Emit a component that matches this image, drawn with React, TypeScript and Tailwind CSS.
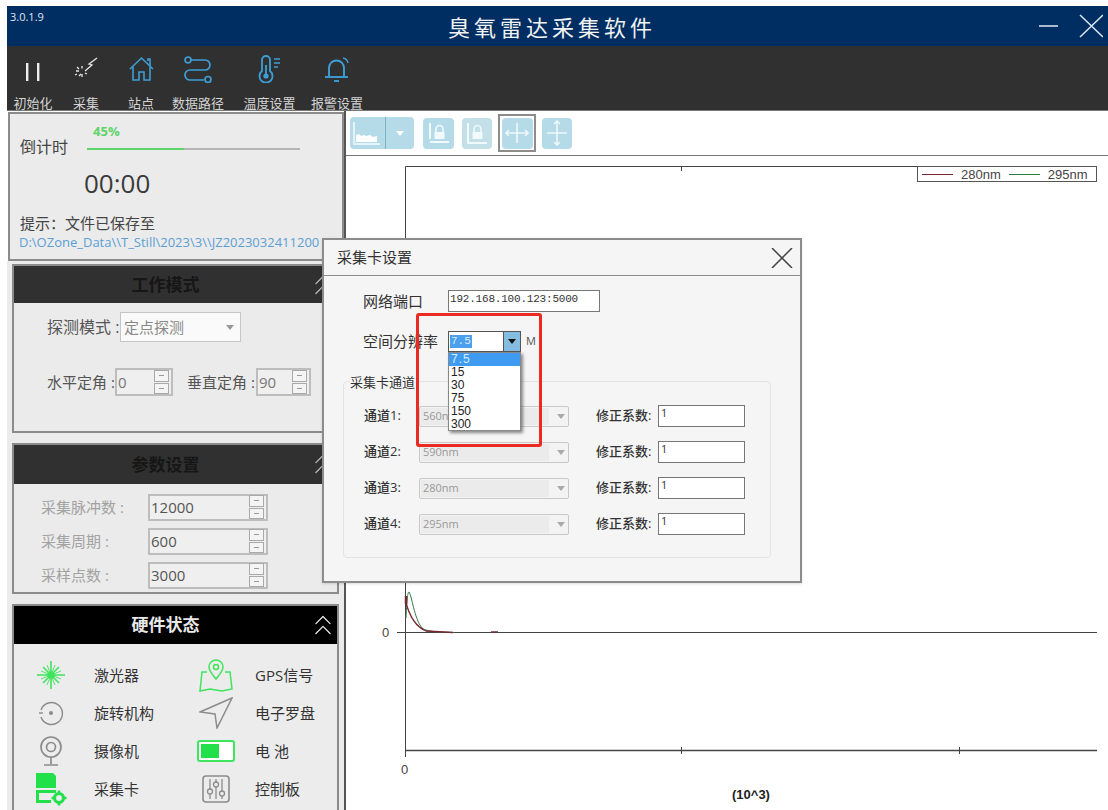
import React from "react";
import { ChevronsUp } from "lucide-react";

const CJK = "font-['Open_Sans','Noto_Sans_CJK_SC',sans-serif]";
const MONO = "font-['Liberation_Mono','Noto_Sans_CJK_SC',monospace]";

function ToolItem({ label, icon, w }: { label: string; icon: React.ReactNode; w: string }) {
  return (
    <div className={`flex flex-col items-center ${w}`}>
      <div className="h-[37px] flex items-end justify-center">{icon}</div>
      <div className="mt-[12px] text-[13px] leading-[16px] text-[#d4d4d4] whitespace-nowrap">{label}</div>
    </div>
  );
}

const BLUE = "#3d9fd8";

function PauseIcon() {
  return (
    <svg width="14" height="22" viewBox="0 0 14 22" fill="#eeeeee">
      <rect x="0" y="2" width="2.4" height="18" />
      <rect x="11" y="2" width="2.4" height="18" />
    </svg>
  );
}

function BurstIcon() {
  return (
    <svg width="26" height="26" viewBox="0 0 26 26" fill="none" stroke="#e8e8e8" strokeWidth="1.3" className="mb-[2px]">
      <path d="M24 3 16 9l3 1-7 6" />
      <path d="M9 11v2.5M9 19v3M3 16h3M12 18l2 1M4 12l2 2M6 21l2-2M2 20l2-1" />
    </svg>
  );
}

function HouseIcon() {
  return (
    <svg width="25" height="26" viewBox="0 0 25 26" fill="none" stroke={BLUE} strokeWidth="1.6" className="mb-[1px]">
      <path d="M1 13 12.5 2 24 13" />
      <path d="M19 5V3h2v7" />
      <path d="M4 11v13h6v-8h5v8h6V11" />
    </svg>
  );
}

function RouteIcon() {
  return (
    <svg width="30" height="27" viewBox="0 0 30 27" fill="none" stroke={BLUE} strokeWidth="1.7">
      <circle cx="5" cy="4" r="3" />
      <path d="M8 4h14a4.5 4.5 0 0 1 0 10H7a5 5 0 0 0 0 10h14" />
      <circle cx="25" cy="23.5" r="3" />
    </svg>
  );
}

function ThermoIcon() {
  return (
    <svg width="24" height="28" viewBox="0 0 24 28" fill="none" stroke={BLUE} strokeWidth="1.8">
      <path d="M4 16V5a4 4 0 0 1 8 0v11a6.5 6.5 0 1 1-8 0z" />
      <circle cx="8" cy="21" r="2.6" fill={BLUE} stroke="none" />
      <path d="M8 10v9" />
      <path d="M16 4h6M16 8h6M16 12h4" strokeWidth="1.4" />
    </svg>
  );
}

function BellIcon() {
  return (
    <svg width="28" height="28" viewBox="0 0 28 28" fill="none" stroke={BLUE} strokeWidth="1.9">
      <path d="M6 21V13a7.5 7.5 0 0 1 15 0v8" />
      <path d="M2 22h23" />
      <path d="M11 26h5" />
      <path d="M20 3a6 6 0 0 1 5 5" strokeWidth="1.4" />
    </svg>
  );
}

function Spinner() {
  return (
    <div className="flex flex-col gap-[1px] w-[15px] h-[24px]">
      <div className="flex-1 bg-[#f4f4f4] border border-[#a9a9a9] flex items-center justify-center">
        <span className="w-[5px] h-[1px] bg-[#999]" />
      </div>
      <div className="flex-1 bg-[#f4f4f4] border border-[#a9a9a9] flex items-center justify-center">
        <span className="w-[5px] h-[1px] bg-[#999]" />
      </div>
    </div>
  );
}

function PanelHeader({ title, dark, h }: { title: string; dark?: boolean; h: string }) {
  return (
    <div className={`${h} relative flex items-center justify-center pr-[20px] ${dark ? "bg-black text-[#e8e8e8]" : "bg-[#303030] text-[#161616]"}`}>
      <span className="text-[17px] font-bold">{title}</span>
      <ChevronsUp className={`absolute right-[-3px] top-[2px] ${dark ? "text-[#e8e8e8]" : "text-[#bbb]"}`} size={34} strokeWidth={0.9} />
    </div>
  );
}

function ParamRow({ label, value }: { label: string; value: string }) {
  return (
    <div className="flex items-center h-[34px]">
      <span className="w-[134px] pl-[27px] text-[15px] text-[#a2a2a2] whitespace-nowrap">{label}</span>
      <div className="w-[120px] h-[27px] border-2 border-[#bdbdbd] bg-[#efefef] flex items-center justify-between pl-[1px] pr-[2px] text-[15px] text-[#555]">
        {value}
        <Spinner />
      </div>
    </div>
  );
}

function AngleBox({ value, width }: { value: string; width: string }) {
  return (
    <div className={`${width} h-[28px] border-2 border-[#bdbdbd] bg-[#efefef] flex items-center justify-between pl-[1px] pr-[2px] text-[15px] text-[#777]`}>
      {value}
      <Spinner />
    </div>
  );
}

function HwItem({ icon, label, gap }: { icon: React.ReactNode; label: string; gap: string }) {
  return (
    <div className="flex items-center h-[38px]">
      <div className="w-[54px] flex justify-center shrink-0">{icon}</div>
      <span className={`${gap} text-[15px] text-[#333] whitespace-nowrap`}>{label}</span>
    </div>
  );
}

function ChannelRow({ name, value }: { name: string; value: string }) {
  return (
    <div className="flex items-center h-[36px]">
      <span className="w-[55px] text-[13px] font-medium text-[#333] whitespace-nowrap">{name}</span>
      <div className="w-[150px] h-[21px] border border-[#c8c8c8] rounded-[2px] bg-[#f3f3f3] flex items-center">
        <div className="w-[128px] h-[17px] ml-[1px] bg-[#ebebeb] pl-[2px] text-[11px] leading-[15px] text-[#999]">{value}</div>
        <svg width="8" height="5" viewBox="0 0 8 5" className="ml-[8px]"><path d="M0 0h8L4 5z" fill="#aaa" /></svg>
      </div>
      <span className="ml-[27px] w-[62px] text-[13px] font-medium text-[#333] whitespace-nowrap">修正系数:</span>
      <div className="w-[87px] h-[22px] border border-[#777] bg-white text-[11px] leading-[14px] pl-[2px] text-[#333]">1</div>
    </div>
  );
}

function LockGlyph({ axis }: { axis?: boolean }) {
  return (
    <svg width="24" height="24" viewBox="0 0 24 24" fill="none" stroke="#f2f9fb" strokeWidth="2">
      {axis ? <path d="M3 2v20h19" /> : <path d="M3 2v16M3 21h19" />}
      <path d="M9 11V8a3.5 3.5 0 0 1 7 0v3" strokeWidth="1.6" />
      <rect x="7.5" y="11" width="10" height="7" fill="#f2f9fb" stroke="none" />
    </svg>
  );
}

function PlotArea() {
  return (
    <svg viewBox="0 0 762 654" width="762" height="654" className="block">
      <g stroke="#444" fill="none" strokeWidth="1">
        <path d="M59.5 10.5V601M59.5 10.5H751M51 476.5H751M335.5 10v5M335.5 591v7M613.5 591v7" />
        <path d="M59 594.5H751" strokeWidth="1.5" />
      </g>
      <path d="M60 462C61 440 62 436 63 436 66 440 68 462 76 472 82 476 90 476 108 476.5" fill="none" stroke="#2f7a42" strokeWidth="1" />
      <path d="M59.5 445C62 455 68 470 80 475L107 476.5" fill="none" stroke="#7a2730" strokeWidth="1.3" />
      <path d="M60 440v8" stroke="#7a2730" strokeWidth="2.5" />
      <path d="M145 476h7" stroke="#7a2730" strokeWidth="1.5" />
    </svg>
  );
}

export default function App() {
  return (
    <div className={`w-[1108px] h-[810px] overflow-hidden relative bg-white pl-[7px] pt-[6px] ${CJK}`}>
      {/* title bar */}
      <div className="h-[40px] bg-[#002e63] flex items-center relative text-white">
        <span className="absolute left-[3px] top-[3px] text-[11px] text-[#dfe6ee]">3.0.1.9</span>
        <div className="flex-1 pl-[58px] text-center text-[22px] tracking-[4px] text-[#f2f2f2] font-['Noto_Sans_CJK_SC',sans-serif]">臭氧雷达采集软件</div>
        <svg width="64" height="24" viewBox="0 0 64 24" fill="none" stroke="#dfe8f0" strokeWidth="1.5" className="mr-[5px] shrink-0">
          <path d="M0 12h19M41 1l23 22M64 1 41 23" />
        </svg>
      </div>

      {/* toolbar */}
      <div className="h-[65px] bg-[#303030] flex items-start pl-[1px] border-b border-[#777]">
        <ToolItem w="w-[50px]" label="初始化" icon={<PauseIcon />} />
        <ToolItem w="w-[56px]" label="采集" icon={<BurstIcon />} />
        <ToolItem w="w-[54px]" label="站点" icon={<HouseIcon />} />
        <ToolItem w="w-[60px]" label="数据路径" icon={<RouteIcon />} />
        <ToolItem w="w-[83px]" label="温度设置" icon={<ThermoIcon />} />
        <ToolItem w="w-[52px]" label="报警设置" icon={<BellIcon />} />
      </div>

      <div className="flex h-[699px]">
        {/* left column */}
        <div className="w-[337px] shrink-0 flex flex-col bg-white">
          <div className="h-[149px] mt-[1px] ml-[1px] border-2 border-[#8b8b8b] bg-[#ebebeb] relative shrink-0">
            <div className="flex pl-[10px] pt-[10px]">
              <span className="text-[16px] mt-[12px] text-[#444] leading-[22px] whitespace-nowrap">倒计时</span>
              <div className="ml-[19px] w-[213px]">
                <div className="pl-[6px] text-[13px] leading-[14px] font-bold text-[#5fd46a]">45%</div>
                <div className="mt-[10px] h-[2px] bg-[#b5b5b5]"><div className="w-[97px] h-[2px] bg-[#5fd46a]" /></div>
              </div>
            </div>
            <div className="pl-[74px] mt-[7px] text-[26px] leading-[36px] text-[#3a3a3a]">00:00</div>
            <div className="pl-[10px] mt-[12px] text-[15px] leading-[20px] text-[#444]">提示：文件已保存至</div>
            <div className="pl-[9px] mt-[1px] text-[13px] leading-[16px] text-[#5b9fd6] whitespace-nowrap overflow-hidden">D:\OZone_Data\\T_Still\2023\3\\JZ2023032411200</div>
          </div>

          <div className="bg-[#ebebeb] flex-1 flex flex-col gap-[10px] pt-[3px] pl-[5px] pr-[5px]">
            <section className="h-[169px] border-2 border-[#8b8b8b] bg-[#ebebeb] shrink-0">
              <PanelHeader title="工作模式" h="h-[37px]" />
              <div className="pl-[33px] pt-[9px] text-[15px] text-[#555]">
                <div className="flex items-center">
                  <span className="w-[73px] whitespace-nowrap text-[16px]">探测模式 :</span>
                  <div className="w-[121px] h-[30px] border border-[#c6c6c6] bg-[#fafafa] flex items-center text-[15px] text-[#888] pl-[3px] justify-between pr-[6px]">
                    定点探测
                    <svg width="8" height="5" viewBox="0 0 8 5"><path d="M0 0h8L4 5z" fill="#999" /></svg>
                  </div>
                </div>
                <div className="flex items-center mt-[26px]">
                  <span className="w-[68px] whitespace-nowrap">水平定角 :</span>
                  <AngleBox value="0" width="w-[58px]" />
                  <span className="ml-[14px] w-[69px] whitespace-nowrap">垂直定角 :</span>
                  <AngleBox value="90" width="w-[55px]" />
                </div>
              </div>
            </section>

            <section className="h-[151px] border-2 border-[#8b8b8b] bg-[#ebebeb] shrink-0">
              <PanelHeader title="参数设置" h="h-[39px]" />
              <div className="pt-[6px]">
                <ParamRow label="采集脉冲数 :" value="12000" />
                <ParamRow label="采集周期 :" value="600" />
                <ParamRow label="采样点数 :" value="3000" />
              </div>
            </section>

            <section className="flex-1 border-2 border-[#8b8b8b] border-b-0 bg-[#ececec]">
              <PanelHeader dark title="硬件状态" h="h-[38px]" />
              <div className="grid grid-cols-[165px_1fr] pl-[10px] pt-[12px]">
                <div className="flex flex-col">
                  <HwItem gap="ml-[16px]" label="激光器" icon={
                    <svg width="28" height="28" viewBox="0 0 28 28" stroke="#3fe45c" strokeWidth="1.3"><path d="M14 0v28M0 14h28M6 6l16 16M22 6 6 22" strokeWidth="1.6" /><path d="M10 4l8 20M18 4l-8 20M4 10l20 8M24 10 4 18" strokeWidth="0.9" /><circle cx="14" cy="14" r="3" fill="#3fe45c" /></svg>
                  } />
                  <HwItem gap="ml-[16px]" label="旋转机构" icon={
                    <svg width="26" height="26" viewBox="0 0 26 26" fill="none" stroke="#8c8c8c" strokeWidth="1.4"><path d="M3 10A11 11 0 1 1 3 17" /><path d="M1 13h4" /><circle cx="13" cy="13" r="2" fill="#8c8c8c" stroke="none" /></svg>
                  } />
                  <HwItem gap="ml-[16px]" label="摄像机" icon={
                    <svg width="24" height="30" viewBox="0 0 24 30" fill="none" stroke="#8c8c8c" strokeWidth="1.7"><circle cx="12" cy="11" r="10" /><circle cx="12" cy="11" r="4.5" /><path d="M12 21v7M5 29h14" /></svg>
                  } />
                  <HwItem gap="ml-[16px]" label="采集卡" icon={
                    <svg width="32" height="34" viewBox="0 0 32 34" fill="#22e04a"><path d="M1 1h17l3 3v12H1z" /><path fillRule="evenodd" d="M1 18h20v3H4v7h12v3H1z" /><circle cx="24" cy="26" r="4.5" fill="none" stroke="#22e04a" strokeWidth="3.2" /><path d="M24 18.5v3M24 30.5v3M16.5 26h3M28.5 26h3" stroke="#22e04a" strokeWidth="2.6" /></svg>
                  } />
                </div>
                <div className="flex flex-col">
                  <HwItem gap="ml-[12px]" label="GPS信号" icon={
                    <svg width="34" height="33" viewBox="0 0 34 33" fill="none" stroke="#3fe45c" strokeWidth="1.5"><path d="M17 20c-4-5-7-8-7-12a7 7 0 0 1 14 0c0 4-3 7-7 12z" /><circle cx="17" cy="8" r="2.5" /><path d="M8 13H3L1 32l10-2 12 2 10-2-2-17h-5" /></svg>
                  } />
                  <HwItem gap="ml-[12px]" label="电子罗盘" icon={
                    <svg width="34" height="32" viewBox="0 0 34 32" fill="none" stroke="#8c8c8c" strokeWidth="1.5"><path d="M33 1 1 15l15 2 2 14z" /></svg>
                  } />
                  <HwItem gap="ml-[12px]" label="电 池" icon={
                    <div className="w-[38px] h-[22px] border-2 border-[#3fe45c] rounded-[3px] flex p-[2px] bg-white"><div className="w-[18px] bg-[#22e04a]" /></div>
                  } />
                  <HwItem gap="ml-[12px]" label="控制板" icon={
                    <svg width="28" height="28" viewBox="0 0 28 28" fill="none" stroke="#8c8c8c" strokeWidth="1.3"><rect x="1" y="1" width="26" height="26" rx="3" strokeWidth="1.6" /><path d="M8 4v10M8 19v5M14 4v3M14 12v12M20 4v12M20 21v3" /><circle cx="8" cy="16.5" r="2.5" /><circle cx="14" cy="9.5" r="2.5" /><circle cx="20" cy="18.5" r="2.5" /></svg>
                  } />
                </div>
              </div>
            </section>
          </div>
        </div>

        {/* chart side */}
        <div className="flex-1 flex flex-col border-l-2 border-[#555]">
          <div className="h-[45px] shrink-0 border-b border-[#777] flex items-center pl-[4px]">
            <div className="w-[64px] h-[32px] rounded-[4px] bg-[#b5dbe8] flex items-center">
              <svg width="32" height="26" viewBox="0 0 32 26" className="ml-[2px]" fill="none"><path d="M4 22V15l3-1 2 2 3-1 2 1 4-1 3 2 4-1v6z" fill="#fff" /><path d="M2 2v22h26" stroke="#e4f3f8" strokeWidth="2" /></svg>
              <span className="w-[1px] h-[32px] bg-[#7fb0c4] ml-[1px]" />
              <svg width="8" height="5" viewBox="0 0 8 5" className="ml-[10px]"><path d="M0 0h8L4 5z" fill="#fff" /></svg>
            </div>
            <div className="ml-[9px] w-[31px] h-[31px] rounded-[4px] bg-[#b5dbe8] flex items-center justify-center">
              <LockGlyph />
            </div>
            <div className="ml-[8px] w-[30px] h-[31px] rounded-[4px] bg-[#c3dfe7] flex items-center justify-center">
              <LockGlyph axis />
            </div>
            <div className="ml-[6px] w-[38px] h-[38px] border-2 border-[#8c8c8c] flex items-center justify-center">
              <div className="w-[31px] h-[31px] rounded-[4px] bg-[#b5dbe8] flex items-center justify-center">
                <svg width="24" height="24" viewBox="0 0 24 24" fill="none" stroke="#eef8fb" strokeWidth="1.6"><path d="M1 12h22M12 2v20M4 9l-3 3 3 3M20 9l3 3-3 3" /></svg>
              </div>
            </div>
            <div className="ml-[6px] w-[30px] h-[31px] rounded-[4px] bg-[#b5dbe8] flex items-center justify-center">
              <svg width="24" height="26" viewBox="0 0 24 26" fill="none" stroke="#eef8fb" strokeWidth="1.6"><path d="M2 13h20M12 1v24M9 4l3-3 3 3M9 22l3 3 3-3" /></svg>
            </div>
          </div>
          <div className="flex-1 relative bg-white overflow-hidden">
            <PlotArea />
            <div className="absolute left-[36px] top-[467px] text-[13px] text-[#444] font-['Liberation_Sans',sans-serif]">0</div>
            <div className="absolute left-[55px] top-[604px] text-[13px] text-[#444] font-['Liberation_Sans',sans-serif]">0</div>
            <div className="absolute left-[386px] top-[629px] text-[13px] text-[#222] font-['Liberation_Sans',sans-serif] font-bold">(10^3)</div>
            {/* legend */}
            <div className="absolute left-[571px] top-[10px] w-[180px] h-[16px] border border-[#555] bg-white flex items-center text-[13px] leading-none text-[#444] font-['Liberation_Sans',sans-serif] pl-[4px]">
              <span className="w-[31px] h-[1px] bg-[#7a2730]" />
              <span className="ml-[8px]">280nm</span>
              <span className="ml-[8px] w-[31px] h-[1px] bg-[#2f7a42]" />
              <span className="ml-[8px]">295nm</span>
            </div>
          </div>
        </div>
      </div>

      {/* 采集卡设置 dialog */}
      <div className="absolute left-[322px] top-[238px] w-[480px] h-[345px] bg-[#f5f5f5] border-2 border-[#8c8c8c] shadow-sm">
        <div className="h-[36px] border-b border-[#8c8c8c] flex items-center justify-between pl-[13px] pr-[7px]">
          <span className="text-[15px] text-[#333]">采集卡设置</span>
          <svg width="22" height="20" viewBox="0 0 22 20" fill="none" stroke="#444" strokeWidth="1.5"><path d="M1 0l20 20M21 0 1 20" /></svg>
        </div>
        <div className="relative">
          <div className="flex items-center pl-[39px] pt-[14px]">
            <span className="w-[85px] text-[15px] leading-[22px] text-[#333]">网络端口</span>
            <div className={`w-[152px] h-[22px] border border-[#777] bg-white text-[11px] leading-[16px] pl-[1px] tracking-[-0.2px] text-[#333] ${MONO}`}>192.168.100.123:5000</div>
          </div>
          <div className="flex items-center pl-[39px] pt-[19px]">
            <span className="w-[85px] text-[15px] leading-[21px] text-[#333]">空间分辨率</span>
            <div className="w-[73px] h-[21px] border border-[#555] bg-white flex items-center justify-between">
              <span className={`ml-[1px] bg-[#4aa0ea] px-[1px] text-[11px] leading-[13px] text-[#d9ecfb] ${MONO}`}>7.5</span>
              <div className="w-[17px] h-[19px] bg-[#84bde0] border-l border-[#555] flex items-center justify-center">
                <svg width="8" height="5" viewBox="0 0 8 5"><path d="M0 0h8L4 5z" fill="#111" /></svg>
              </div>
            </div>
            <span className="ml-[5px] text-[11px] text-[#555]">M</span>
          </div>

          <fieldset className="absolute left-[19px] top-[105px] w-[428px] h-[177px] border border-[#e3e3e3] rounded-[4px]">
            <div className="absolute -top-[9px] left-[6px] text-[13px] leading-[18px] text-[#333] bg-[#f5f5f5] pr-[4px]">采集卡通道</div>
            <div className="pl-[20px] pt-[16px]">
              <ChannelRow name="通道1:" value="560nm" />
              <ChannelRow name="通道2:" value="590nm" />
              <ChannelRow name="通道3:" value="280nm" />
              <ChannelRow name="通道4:" value="295nm" />
            </div>
          </fieldset>

          {/* open dropdown */}
          <div className="absolute left-[124px] top-[76px] w-[73px] h-[79px] bg-white border border-[#888] shadow-[2px_2px_3px_rgba(0,0,0,0.45)] text-[12px] leading-[13px] text-[#222] font-['Liberation_Sans',sans-serif]">
            <div className="bg-[#3f9bf2] text-[#d9ecfb] pl-[2px] tracking-[1px]">7.5</div>
            <div className="pl-[2px]">15</div>
            <div className="pl-[2px]">30</div>
            <div className="pl-[2px]">75</div>
            <div className="pl-[2px]">150</div>
            <div className="pl-[2px]">300</div>
          </div>

          {/* annotation frame */}
          <div className="absolute left-[92px] top-[37px] w-[126px] h-[134px] border-[3px] border-[#ec2a22] rounded-[3px]" />
        </div>
      </div>
    </div>
  );
}
